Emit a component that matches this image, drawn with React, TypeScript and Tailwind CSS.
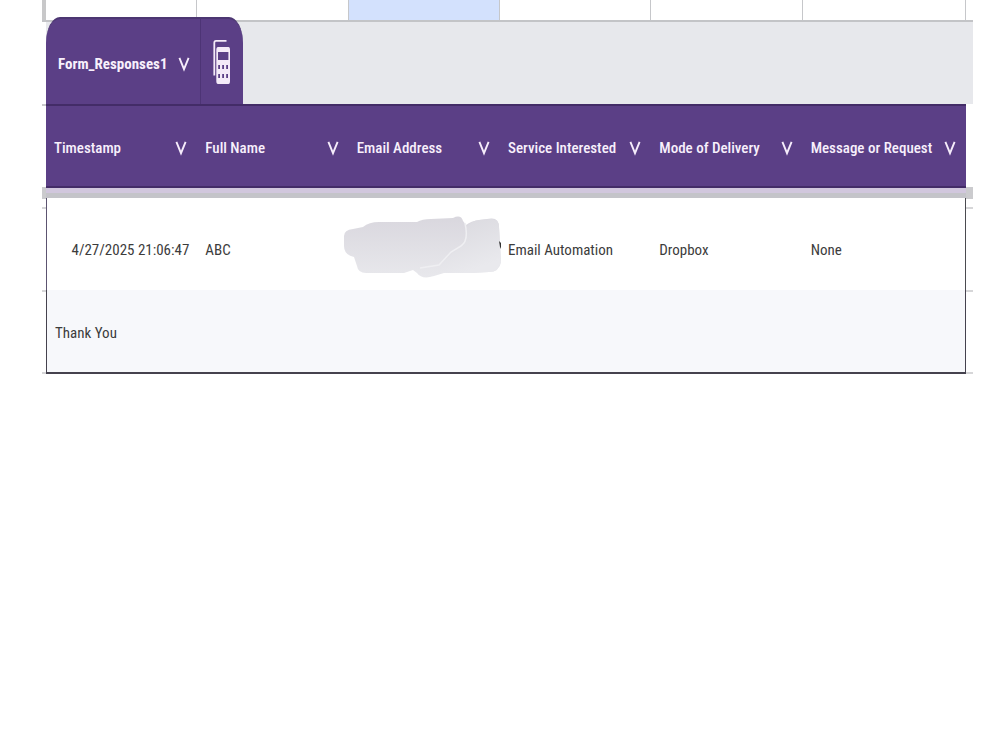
import React from "react";

const columns = [
  { label: "Timestamp", width: "w-[16.45%]" },
  { label: "Full Name", width: "w-[16.45%]" },
  { label: "Email Address", width: "w-[16.45%]" },
  { label: "Service Interested", width: "w-[16.45%]" },
  { label: "Mode of Delivery", width: "w-[16.45%]" },
  { label: "Message or Request", width: "w-[17.75%]" },
];

function Chevron() {
  return (
    <svg width="12" height="16" viewBox="0 0 12 16" fill="none" aria-hidden="true" className="shrink-0">
      <path d="M1.4 1.8 L6 13.2 L10.6 1.8" stroke="#f6ecfb" strokeWidth="1.9" />
    </svg>
  );
}

function TableIcon() {
  return (
    <svg width="18" height="48" viewBox="213 38 18 48" fill="none" aria-hidden="true">
      <path d="M214.3 75.5 V43 Q214.3 40.8 216 40.8 H226.5" stroke="#f4eaf8" strokeWidth="1.8" />
      <path
        fill="#f4eaf8"
        fillRule="evenodd"
        d="M218 47 H228.5 Q230 47 230 50 V81 Q230 84 228.5 84 H218 Q216.3 84 216.3 81 V50 Q216.3 47 218 47 Z M218 52 V60 H228.4 V52 Z M218.2 65 V69 H220 V65 Z M222.2 65 V69 H224 V65 Z M226.2 65 V69 H228 V65 Z M218.2 74 V78 H220 V74 Z M222.2 74 V78 H224 V74 Z M226.2 74 V78 H228 V74 Z"
      />
    </svg>
  );
}

function Redaction() {
  return (
    <svg
      width="160"
      height="64"
      viewBox="342 215 160 64"
      aria-label="Hidden email address"
      className="absolute -left-[6px] top-[17px]"
    >
      <defs>
        <linearGradient id="smudge" x1="0" y1="0" x2="0" y2="1">
          <stop offset="0" stopColor="#d9d7de" />
          <stop offset="1" stopColor="#e8e8ec" />
        </linearGradient>
        <linearGradient id="stroke" x1="0" y1="0" x2="0.4" y2="1">
          <stop offset="0" stopColor="#d9d8de" />
          <stop offset="1" stopColor="#e9e9ed" />
        </linearGradient>
      </defs>
      <path
        fill="url(#smudge)"
        d="M343 236 Q343 230 352 229 L362 227 Q368 222 378 222 H416 Q421 219 430 219 L452 218 Q460 214 462 221 L465 225 Q470 221 478 220 L490 218.500 Q498 218 498 227 L500 262 Q498 272 488 272 L470 273 H443 L433 276 Q421 280 416 273 L412 270 L403 273 H365 Q357 273 356 266 L353 257 Q343 255 343 246 Z"
      />
      <path
        fill="url(#stroke)"
        d="M466 227 Q470 221 478 220 L490 219 Q498 219 498 227 L500 262 Q498 272 488 272 L470 273 H437 L440 266 L452 253 L463 245 Z"
      />
      <path d="M464 223 Q468 241 460 246 L450 252 L438 265 L419 268" fill="none" stroke="#efeff2" strokeWidth="1.5" />
      <path d="M498 241 L500 243 V249 L499 247 Z" fill="#333" />
    </svg>
  );
}

function Gutter({ side }: { side: "left" | "right" }) {
  return (
    <div className={side === "left" ? "w-1 shrink-0" : "w-[7px] shrink-0"} aria-hidden="true">
      <div className={side === "left" ? "h-[83px] border-t-2 border-[#c9c9cb]" : "h-[83px]"} />
      <div className="h-3 bg-[#cbcbce]" />
      <div className="h-[10px] border-b-2 border-[#d6d6d8]" />
      <div className="h-[83px] border-b-2 border-[#d6d6d8]" />
      <div className="h-[82px] border-b-2 border-[#d6d6d8]" />
    </div>
  );
}

export default function App() {
  return (
    <main className="min-h-screen bg-white pl-[42px] pr-[27px] font-['Roboto_Condensed','Roboto',sans-serif] text-[#3c3c3c]">
      <div className="flex h-[22px] border-b-2 border-[#c3c4c7]">
        <div className="w-1 shrink-0 bg-[#c8c8c9]" />
        <div className="flex flex-1">
          {columns.map((column, index) => (
            <div
              key={column.label}
              className={`${column.width} border-r border-[#c6c7ca] ${index === 2 ? "bg-[#d3e1fd]" : ""}`}
            />
          ))}
        </div>
        <div className="w-[7px] shrink-0" />
      </div>

      <div className="ml-1 h-[82px] bg-[#e7e8ec]">
        <div className="relative -top-[5px] flex h-[87px] w-[197px] overflow-hidden rounded-tl-[14px_26px] rounded-tr-[14px_26px] border-t-2 border-[#4c3672] bg-[#5b3f86]">
          <button
            type="button"
            className="flex w-[155px] items-center justify-between border-r border-[#4d3475] pt-1 pl-3 pr-[10px] text-[15px] leading-6 font-bold text-[#f8f0fc]"
          >
            Form_Responses1
            <Chevron />
          </button>
          <button type="button" aria-label="Table view" className="flex flex-1 items-center justify-center">
            <TableIcon />
          </button>
        </div>
      </div>

      <div className="flex items-start">
        <Gutter side="left" />
        <table className="flex-1 table-fixed border-separate border-spacing-0 text-[15px] leading-6">
          <thead>
            <tr>
              {columns.map((column) => (
                <th
                  key={column.label}
                  scope="col"
                  className={`${column.width} h-[84px] border-y-2 border-[#432c67] bg-[#5b3f86] p-0 text-left font-medium text-[#f8f0fc]`}
                >
                  <button type="button" className="flex w-full items-center justify-between whitespace-nowrap pt-1 pl-2 pr-[10px]">
                    {column.label}
                    <Chevron />
                  </button>
                </th>
              ))}
            </tr>
          </thead>
          <tbody>
            <tr>
              <td colSpan={6} className="h-[10px] border-b-[5px] border-[#c4c4c9] bg-[#d1c7dd] p-0" />
            </tr>
            <tr className="h-[92px]">
              <td className="border-l border-[#5c5470] p-0 pt-3 pr-2 text-right whitespace-nowrap">
                4/27/2025 21:06:47
              </td>
              <td className="p-0 pt-3 pl-2">ABC</td>
              <td className="relative p-0">
                <Redaction />
              </td>
              <td className="p-0 pt-3 pl-2 whitespace-nowrap">Email Automation</td>
              <td className="p-0 pt-3 pl-2">Dropbox</td>
              <td className="border-r border-[#4b4b50] p-0 pt-3 pl-2">None</td>
            </tr>
            <tr className="h-[84px] bg-[#f7f8fb]">
              <td colSpan={6} className="border-x border-b-2 border-[#45424e] p-0 pt-1 pl-2">
                Thank You
              </td>
            </tr>
          </tbody>
        </table>
        <Gutter side="right" />
      </div>
    </main>
  );
}
